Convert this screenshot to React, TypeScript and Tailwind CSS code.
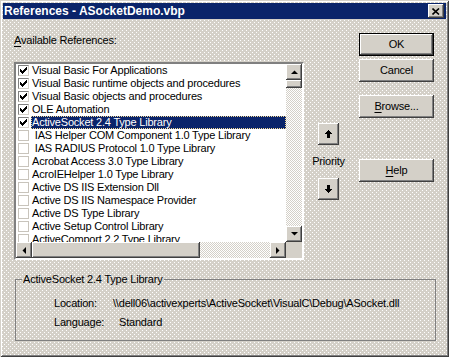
import React from "react";

const font = "font-['Liberation_Sans',Arial,sans-serif] text-[11px] tracking-[-0.2px] leading-[13px]";

// classic raised 3D edge
const raised =
  "bg-[#d4d0c8] shadow-[inset_-1px_-1px_#404040,inset_1px_1px_#ffffff,inset_-2px_-2px_#808080,inset_2px_2px_#d4d0c8]";

const checker =
  "bg-[repeating-conic-gradient(#ffffff_0_25%,#d4d0c8_0_50%)] bg-[length:2px_2px]";

const dither =
  "bg-[#d4d0c8] [background-image:conic-gradient(from_270deg_at_1px_1px,#ffffff_25%,transparent_0),conic-gradient(from_270deg_at_1px_1px,#ffffff_25%,transparent_0)] [background-size:4px_4px] [background-position:0_0,2px_2px]";

const refs = [
  { label: "Visual Basic For Applications", checked: true },
  { label: "Visual Basic runtime objects and procedures", checked: true },
  { label: "Visual Basic objects and procedures", checked: true },
  { label: "OLE Automation", checked: true },
  { label: "ActiveSocket 2.4 Type Library", checked: true, selected: true },
  { label: "\u00a0IAS Helper COM Component 1.0 Type Library", checked: false },
  { label: "\u00a0IAS RADIUS Protocol 1.0 Type Library", checked: false },
  { label: "Acrobat Access 3.0 Type Library", checked: false },
  { label: "AcroIEHelper 1.0 Type Library", checked: false },
  { label: "Active DS IIS Extension Dll", checked: false },
  { label: "Active DS IIS Namespace Provider", checked: false },
  { label: "Active DS Type Library", checked: false },
  { label: "Active Setup Control Library", checked: false },
  { label: "ActiveComport 2.2 Type Library", checked: false },
];

const CheckBox: React.FC<{ checked: boolean }> = ({ checked }) => (
  <div
    className={`w-[11px] h-[11px] bg-white shrink-0 border ${
      checked
        ? "border-t-[#808080] border-l-[#808080] border-b-[#d4d0c8] border-r-[#d4d0c8]"
        : "border-[#c8c4bc]"
    }`}
  >
    {checked && (
      <svg width="9" height="9" viewBox="0 0 9 9" shapeRendering="crispEdges">
        {/* pixel check mark */}
        <rect x="7" y="1" width="1" height="3" fill="#000" />
        <rect x="6" y="2" width="1" height="3" fill="#000" />
        <rect x="5" y="3" width="1" height="3" fill="#000" />
        <rect x="4" y="4" width="1" height="3" fill="#000" />
        <rect x="3" y="5" width="1" height="3" fill="#000" />
        <rect x="2" y="4" width="1" height="3" fill="#000" />
        <rect x="1" y="3" width="1" height="3" fill="#000" />
      </svg>
    )}
  </div>
);

const Arrow: React.FC<{ dir: "up" | "down" | "left" | "right" }> = ({ dir }) => {
  const pts = {
    up: "0,4 7,4 3.5,0.5",
    down: "0,0 7,0 3.5,3.5",
    left: "4,0 4,7 0.5,3.5",
    right: "0,0 0,7 3.5,3.5",
  }[dir];
  const vert = dir === "up" || dir === "down";
  return (
    <svg width={vert ? 7 : 4} height={vert ? 4 : 7} viewBox={vert ? "0 0 7 4" : "0 0 4 7"}>
      <polygon points={pts} fill="#000" />
    </svg>
  );
};

const ScrollBtn: React.FC<{ dir: "up" | "down" | "left" | "right" }> = ({ dir }) => (
  <div className={`w-[16px] h-[16px] shrink-0 flex items-center justify-center ${raised}`}>
    <Arrow dir={dir} />
  </div>
);

const Button: React.FC<{ children: React.ReactNode; isDefault?: boolean; className?: string }> = ({
  children,
  isDefault,
  className = "",
}) => (
  <div
    className={`w-[75px] h-[23px] flex items-center justify-center text-black ${
      isDefault ? "border border-black" : ""
    } ${className}`}
  >
    <div className={`w-full h-full flex items-center justify-center ${raised}`}>{children}</div>
  </div>
);

const BigArrow: React.FC<{ down?: boolean }> = ({ down }) => (
  <svg width="7" height="8" viewBox="0 0 7 8" shapeRendering="crispEdges" className={down ? "rotate-180" : ""}>
    <rect x="3" y="0" width="1" height="1" fill="#000" />
    <rect x="2" y="1" width="3" height="1" fill="#000" />
    <rect x="1" y="2" width="5" height="1" fill="#000" />
    <rect x="0" y="3" width="7" height="1" fill="#000" />
    <rect x="2" y="4" width="3" height="4" fill="#000" />
  </svg>
);

export default function App() {
  return (
    <div className={`${font} text-black`}>
      <div
        className={`w-[449px] h-[357px] p-[3px] flex flex-col ${dither} shadow-[inset_1px_1px_#d4d0c8,inset_-1px_-1px_#404040,inset_2px_2px_#ffffff,inset_-2px_-2px_#808080]`}
      >
        {/* Title bar */}
        <div className="h-[16px] bg-[#0a246a] flex items-center pl-[1px] pr-[2px]">
          <span className="flex-1 text-white font-bold text-[12px] tracking-[0px]">
            References - ASocketDemo.vbp
          </span>
          <div className={`w-[16px] h-[14px] flex items-center justify-center ${raised}`}>
            <svg width="8" height="7" viewBox="0 0 8 7">
              <path d="M0.5 0.5 L7 6.5 M7 0.5 L0.5 6.5" stroke="#000" strokeWidth="1.6" />
            </svg>
          </div>
        </div>

        {/* Main area */}
        <div className="flex">
          <div className="ml-[11px] w-[290px] flex flex-col">
            <div className="mt-[15px] h-[13px]">
              <span className="underline underline-offset-[2px]">A</span>vailable References:
            </div>
            {/* List box */}
            <div className="mt-[15px] h-[198px] flex flex-col border-2 border-t-[#808080] border-l-[#808080] border-b-white border-r-white">
              <div className="flex flex-col h-full shadow-[inset_1px_1px_#404040,inset_-1px_-1px_#d4d0c8]">
                <div className="flex flex-1 min-h-0">
                  <div className="flex-1 bg-white overflow-hidden">
                    {refs.map((r) => (
                      <div key={r.label} className="h-[13px] flex items-center pl-[2px]">
                        <CheckBox checked={r.checked} />
                        <div
                          className={`ml-[2px] flex-1 h-[13px] whitespace-nowrap pl-[1px] ${
                            r.selected
                              ? "bg-[#0a246a] text-white outline outline-1 outline-dotted outline-[#f5db95] -outline-offset-1"
                              : ""
                          }`}
                        >
                          {r.label}
                        </div>
                      </div>
                    ))}
                  </div>
                  <div className="w-[16px] flex flex-col">
                    <ScrollBtn dir="up" />
                    <div className={`h-[8px] ${raised}`} />
                    <div className={`flex-1 ${checker}`} />
                    <ScrollBtn dir="down" />
                  </div>
                </div>
                <div className="flex h-[16px]">
                  <ScrollBtn dir="left" />
                  <div className={`w-[168px] ${raised}`} />
                  <div className={`flex-1 ${checker}`} />
                  <ScrollBtn dir="right" />
                  <div className="w-[16px] bg-[#d4d0c8]" />
                </div>
              </div>
            </div>
          </div>

          {/* Priority */}
          <div className="ml-[6px] w-[37px] flex flex-col items-center">
            <div className={`mt-[104px] w-[21px] h-[22px] flex items-center justify-center ${raised}`}>
              <BigArrow />
            </div>
            <div className="mt-[10px] h-[13px]">Priority</div>
            <div className={`mt-[10px] w-[21px] h-[22px] flex items-center justify-center ${raised}`}>
              <BigArrow down />
            </div>
          </div>

          {/* Buttons */}
          <div className="ml-[12px] flex flex-col">
            <Button isDefault className="mt-[14px]">
              OK
            </Button>
            <Button className="mt-[3px]">Cancel</Button>
            <Button className="mt-[13px]">
              <span>
                <span className="underline underline-offset-[2px]">B</span>rowse...
              </span>
            </Button>
            <Button className="mt-[41px]">
              <span>
                <span className="underline underline-offset-[2px]">H</span>elp
              </span>
            </Button>
          </div>
        </div>

        {/* Group box */}
        <fieldset className="mt-[13px] ml-[12px] w-[421px] h-[68px] border border-[#808080] px-[6px]">
          <legend className="px-[1px] h-[13px]">ActiveSocket 2.4 Type Library</legend>
          <div className="ml-[32px] mt-[11px] flex h-[13px]">
            <div className="w-[59px]">Location:</div>
            <div>\\dell06\activexperts\ActiveSocket\VisualC\Debug\ASocket.dll</div>
          </div>
          <div className="ml-[32px] mt-[6px] flex h-[13px]">
            <div className="w-[65px]">Language:</div>
            <div>Standard</div>
          </div>
        </fieldset>
      </div>
    </div>
  );
}
